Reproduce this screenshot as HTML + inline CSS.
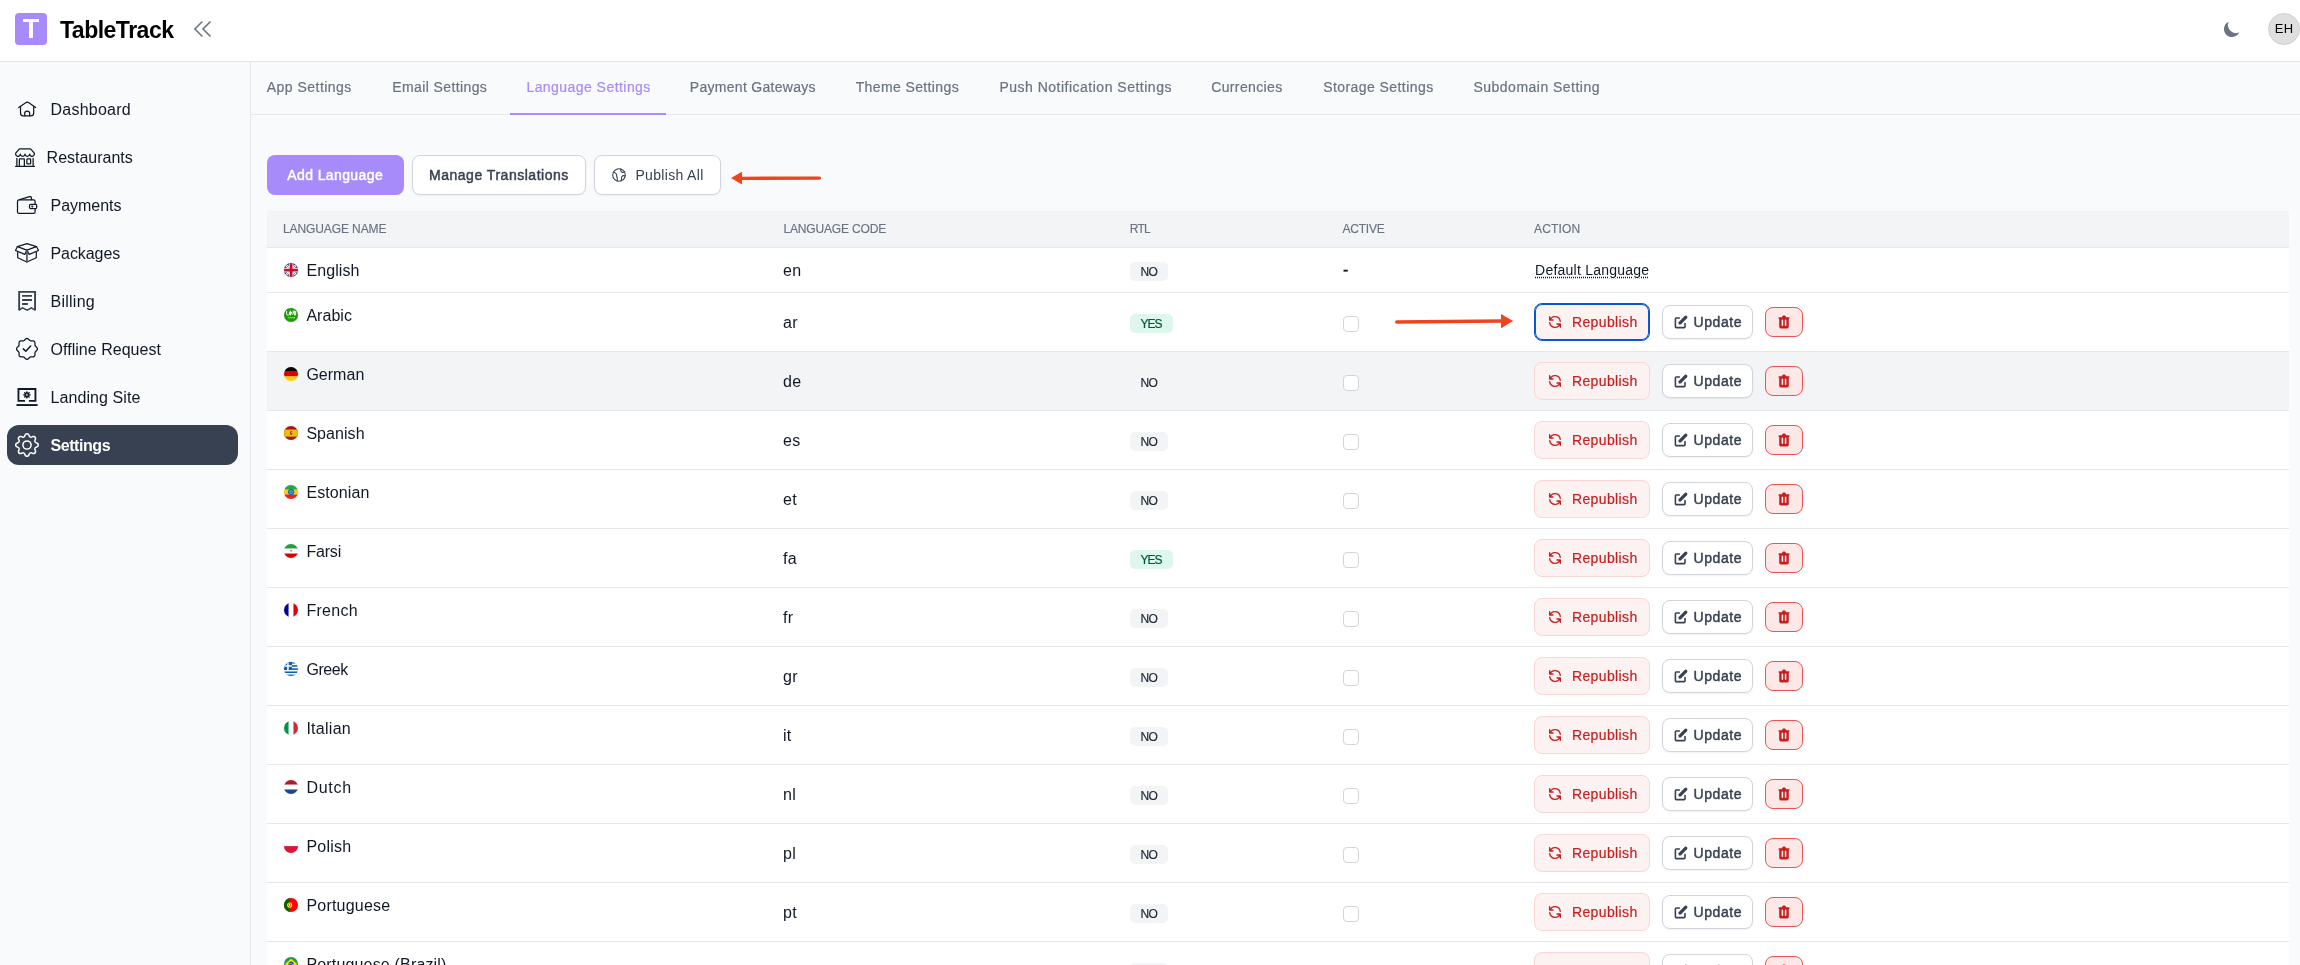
<!DOCTYPE html>
<html lang="en"><head><meta charset="utf-8"><title>TableTrack - Language Settings</title>
<style>
*{box-sizing:border-box;margin:0;padding:0}
html,body{width:2300px;height:965px;overflow:hidden;background:#f9fafb;-webkit-font-smoothing:antialiased;will-change:transform;font-family:"Liberation Sans",sans-serif;color:#111827}
.abs{position:absolute}
#hdr{position:absolute;left:0;top:0;width:2300px;height:62px;background:#fff;border-bottom:1px solid #e5e7eb}
#logo{position:absolute;left:15px;top:13px;width:32px;height:32px;border-radius:4px;background:#a78bfa;color:#fff;font-weight:700;font-size:27px;line-height:32px;text-align:center}
#brand{position:absolute;left:59.800px;top:14px;transform:scaleX(.960);transform-origin:0 0;font-size:24px;line-height:32px;font-weight:700;color:#000;white-space:nowrap}
#side{position:absolute;left:0;top:62px;width:251px;height:903px;background:#f9fafb;border-right:1px solid #e5e7eb}
.nav{position:absolute;left:7px;width:231px;height:40px;border-radius:12px;font-size:16px;line-height:40px;color:#111827;white-space:nowrap}
.nav span{position:absolute;top:1px}
.nav.act{background:#374151;color:#fff;font-weight:700}
#main{position:absolute;left:251px;top:62px;width:2049px;height:903px;background:#f9fafb}
#tabs{position:absolute;left:0;top:0;width:2049px;height:53px;border-bottom:1px solid #e5e7eb}
.tab{position:absolute;top:0;height:52px;line-height:50px;font-size:14px;color:#6b7280;-webkit-text-stroke:.200px currentColor;white-space:nowrap}
.tab.on{color:#a78bfa}
.tab.on:after{content:"";position:absolute;left:-16px;right:-15px;bottom:-1px;height:2px;background:#a78bfa}
.btn{position:absolute;top:155px;height:40px;border-radius:8px;font-size:14px;font-weight:400;-webkit-text-stroke:.450px currentColor;line-height:40px;white-space:nowrap}
.btn span{position:absolute;top:0}
.btn.w{background:#fff;color:#374151;border:1px solid #d1d5db;box-shadow:0 1px 2px rgba(0,0,0,.05);line-height:38px}
#thead{position:absolute;left:267px;top:211px;width:2022px;height:37px;background:#f3f4f6;border-bottom:1px solid #e5e7eb}
.th{position:absolute;top:0;line-height:36px;font-size:12px;color:#6b7280;-webkit-text-stroke:.150px currentColor;text-transform:uppercase;white-space:nowrap}
.row{position:absolute;left:267px;width:2022px;background:#fff;border-bottom:1px solid #e5e7eb}
.row.hov{background:#f3f4f6}
.cell{position:absolute;font-size:16px;line-height:24px;color:#111827;white-space:nowrap}
.flag{position:absolute;left:16px;width:16px;height:16px}
.flag svg{position:absolute;left:.900px;top:.900px;border-radius:50%;box-shadow:0 0 0 .600px #e3e7ef}
.badge{position:absolute;left:863px;height:19px;border-radius:5px;font-size:12px;-webkit-text-stroke:.200px currentColor;line-height:20px;white-space:nowrap}
.badge span{position:absolute;left:10.500px;top:0}
.badge.no{width:38px;background:#f3f4f6;color:#1f2937}
.badge.yes{width:43px;background:#def7ec;color:#03543f}
.cb{position:absolute;left:1076px;width:16px;height:16px;border:1px solid #d1d5db;border-radius:4px;background:#fff}
.rep{position:absolute;left:1267px;width:116px;height:38px;border:1px solid #fbd5d5;border-radius:8px;background:#fdf2f2;color:#c81e1e;font-size:14px;-webkit-text-stroke:.200px #c81e1e}
.rep.foc{box-shadow:inset 0 0 0 1px #0b57d0;border-color:#0b57d0}
.rep span{position:absolute;left:36.900px;top:0;line-height:36px;white-space:nowrap}
.rep svg{position:absolute;left:12px;top:10px}
.upd{position:absolute;left:1395px;width:91px;height:34px;border:1px solid #d1d5db;border-radius:8px;background:#fff;color:#374151;font-size:14px;font-weight:400;-webkit-text-stroke:.450px #374151;box-shadow:0 1px 2px rgba(0,0,0,.06)}
.upd span{position:absolute;left:30.500px;top:0;line-height:32px;white-space:nowrap}
.upd svg{position:absolute;left:9.500px;top:8px}
.del{position:absolute;left:1498px;width:38px;height:30px;border:1px solid #f05252;border-radius:8px;background:#fde8e8}
.del svg{position:absolute;left:10px;top:6px}
</style></head>
<body>
<div id="hdr"><div id="logo">T</div><div id="brand" style="letter-spacing:-0.54px">TableTrack</div><svg class="abs" style="left:190px;top:17px" width="24" height="24" viewBox="190 17 24 24" fill="none" stroke="#6b7280" stroke-width="1.600" stroke-linejoin="miter"><path d="M202.400 21.500 194.900 29l7.500 7.500M210.500 21.500 203 29l7.500 7.500"/></svg><svg class="abs" style="left:2221.800px;top:18.600px" width="20" height="20" viewBox="0 0 20 20"><path d="M17.293 13.293A8 8 0 0 1 6.707 2.707a8.001 8.001 0 1 0 10.586 10.586z" fill="#6b7280"/></svg><div class="abs" style="left:2268px;top:13px;width:32px;height:32px;border-radius:16px;background:#dfdfdf;border:1px solid #d0d0d0;font-size:13px;line-height:30px;text-align:center;color:#000;letter-spacing:.4px;text-indent:.4px">EH</div></div>
<div id="side">
<div class="nav" style="top:27px"><span style="left:43.5px;letter-spacing:0.23px">Dashboard</span></div>
<div class="nav" style="top:75px"><span style="left:39.6px;letter-spacing:-0.01px">Restaurants</span></div>
<div class="nav" style="top:123px"><span style="left:43.5px;letter-spacing:-0.03px">Payments</span></div>
<div class="nav" style="top:171px"><span style="left:43.5px;letter-spacing:-0.07px">Packages</span></div>
<div class="nav" style="top:219px"><span style="left:43.5px;letter-spacing:0.25px">Billing</span></div>
<div class="nav" style="top:267px"><span style="left:43.5px;letter-spacing:0.03px">Offline Request</span></div>
<div class="nav" style="top:315px"><span style="left:43.5px;letter-spacing:0.08px">Landing Site</span></div>
<div class="nav act" style="top:363px"><span style="left:43.5px;letter-spacing:-0.43px">Settings</span></div>
</div>
<svg class="abs" style="left:0;top:0" width="251" height="965" viewBox="0 0 251 965"><g fill="none" stroke="#111827" stroke-width="1.250" stroke-linecap="round" stroke-linejoin="round"><path d="M18.700 107.500 26.500 102.350q.800-.500 1.600 0L35.700 107.500"/><path d="M20.500 106.600v6.400q0 2.900 2.900 2.900h7.400q2.900 0 2.900-2.900v-6.400"/><path d="M24.700 115.700v-2.100a2.500 2.500 0 0 1 5 0v2.100"/></g><path transform="translate(15 147) scale(1.250)" fill="#111827" d="M2.970 1.350A1 1 0 0 1 3.730 1h8.540a1 1 0 0 1 .760.350l2.609 3.044A1.500 1.500 0 0 1 16 5.370v.255a2.375 2.375 0 0 1-4.250 1.458A2.371 2.371 0 0 1 9.875 8 2.370 2.370 0 0 1 8 7.083 2.370 2.370 0 0 1 6.125 8a2.370 2.370 0 0 1-1.875-.917A2.375 2.375 0 0 1 0 5.625V5.370a1.500 1.500 0 0 1 .361-.976zm1.780 4.275a1.375 1.375 0 0 0 2.750 0 .500.500 0 0 1 1 0 1.375 1.375 0 0 0 2.750 0 .500.500 0 0 1 1 0 1.375 1.375 0 1 0 2.750 0V5.370a.500.500 0 0 0-.120-.325L12.270 2H3.730L1.120 5.045A.500.500 0 0 0 1 5.370v.255a1.375 1.375 0 0 0 2.750 0 .500.500 0 0 1 1 0M1.500 8.500A.500.500 0 0 1 2 9v6h1v-5a1 1 0 0 1 1-1h3a1 1 0 0 1 1 1v5h6V9a.500.500 0 0 1 1 0v6h.500a.500.500 0 0 1 0 1H.500a.500.500 0 0 1 0-1H1V9a.500.500 0 0 1 .500-.500M4 15h3v-5H4zm5-5a1 1 0 0 1 1-1h2a1 1 0 0 1 1 1v3a1 1 0 0 1-1 1h-2a1 1 0 0 1-1-1zm3 0h-2v3h2z"/><g fill="none" stroke="#111827" stroke-width="1.250" stroke-linecap="round" stroke-linejoin="round"><rect x="17.500" y="199.900" width="17.600" height="13.500" rx="1.500"/><path d="M19.600 199.700 29.600 196.600q1.400-.400 1.700 1l.400 2"/><rect x="29.500" y="204.400" width="7.200" height="4.200" rx="1.200" fill="#f9fafb"/><circle cx="32.300" cy="206.500" r=".450" fill="#111827"/></g><g fill="none" stroke="#111827" stroke-width="1.200" stroke-linecap="round" stroke-linejoin="round"><path d="M26.900 243.600 17.400 246.600 26.900 250.100 36.500 246.600z"/><path d="M17.400 246.600 15.500 250.500 24.800 254.400 26.900 250.100 29.200 254.400 38.500 250.500 36.500 246.600"/><path d="M17.700 251.600v6.100L26.900 262 36.300 257.700v-6.100"/><path d="M26.900 250.500V262" stroke-width="1.700" stroke="#4b5563"/></g><g fill="none" stroke="#374151" stroke-width="1.850" stroke-linejoin="miter"><path d="M19.150 309.900V291.850H35.050V309.900"/><path d="M18.700 310.300 22.300 307.900 27.300 310.200 31.400 307.900 35.500 310.300" stroke-width="1.500"/><path d="M22.100 295.900H32M22.100 300H32M22.100 304H27.900" stroke-width="1.900"/></g><path d="M27.00 338.45 L27.68 338.59 L28.31 338.96 L28.87 339.48 L29.37 340.04 L29.85 340.51 L30.35 340.82 L30.92 340.95 L31.59 340.95 L32.33 340.92 L33.10 340.95 L33.82 341.13 L34.39 341.51 L34.77 342.08 L34.95 342.80 L34.98 343.57 L34.95 344.31 L34.95 344.98 L35.08 345.55 L35.39 346.05 L35.86 346.53 L36.42 347.03 L36.94 347.59 L37.31 348.22 L37.45 348.90 L37.31 349.58 L36.94 350.21 L36.42 350.77 L35.86 351.27 L35.39 351.75 L35.08 352.25 L34.95 352.82 L34.95 353.49 L34.98 354.23 L34.95 355.00 L34.77 355.72 L34.39 356.29 L33.82 356.67 L33.10 356.85 L32.33 356.88 L31.59 356.85 L30.92 356.85 L30.35 356.98 L29.85 357.29 L29.37 357.76 L28.87 358.32 L28.31 358.84 L27.68 359.21 L27.00 359.35 L26.32 359.21 L25.69 358.84 L25.13 358.32 L24.63 357.76 L24.15 357.29 L23.65 356.98 L23.08 356.85 L22.41 356.85 L21.67 356.88 L20.90 356.85 L20.18 356.67 L19.61 356.29 L19.23 355.72 L19.05 355.00 L19.02 354.23 L19.05 353.49 L19.05 352.82 L18.92 352.25 L18.61 351.75 L18.14 351.27 L17.58 350.77 L17.06 350.21 L16.69 349.58 L16.55 348.90 L16.69 348.22 L17.06 347.59 L17.58 347.03 L18.14 346.53 L18.61 346.05 L18.92 345.55 L19.05 344.98 L19.05 344.31 L19.02 343.57 L19.05 342.80 L19.23 342.08 L19.61 341.51 L20.18 341.13 L20.90 340.95 L21.67 340.92 L22.41 340.95 L23.08 340.95 L23.65 340.82 L24.15 340.51 L24.63 340.04 L25.13 339.48 L25.69 338.96 L26.32 338.59Z" fill="none" stroke="#111827" stroke-width="1.250" stroke-linejoin="round"/><path d="M23.300 348.900 25.800 351.200 30.700 346.100" fill="none" stroke="#111827" stroke-width="1.500" stroke-linecap="round" stroke-linejoin="round"/><g fill="none" stroke="#111827" stroke-width="1.850"><path d="M25 400.850H18.450V388.950H35.450V400.850H28.900"/><path d="M16.500 405.050H37.600" stroke-width="1.900"/></g><path d="M26.90 390.95 L27.27 391.19 L27.52 391.76 L27.67 392.35 L27.84 392.64 L28.16 392.55 L28.68 392.24 L29.27 392.02 L29.69 392.11 L29.78 392.53 L29.56 393.12 L29.25 393.64 L29.16 393.96 L29.45 394.13 L30.04 394.28 L30.61 394.53 L30.85 394.90 L30.61 395.27 L30.04 395.52 L29.45 395.67 L29.16 395.84 L29.25 396.16 L29.56 396.68 L29.78 397.27 L29.69 397.69 L29.27 397.78 L28.68 397.56 L28.16 397.25 L27.84 397.16 L27.67 397.45 L27.52 398.04 L27.27 398.61 L26.90 398.85 L26.53 398.61 L26.28 398.04 L26.13 397.45 L25.96 397.16 L25.64 397.25 L25.12 397.56 L24.53 397.78 L24.11 397.69 L24.02 397.27 L24.24 396.68 L24.55 396.16 L24.64 395.84 L24.35 395.67 L23.76 395.52 L23.19 395.27 L22.95 394.90 L23.19 394.53 L23.76 394.28 L24.35 394.13 L24.64 393.96 L24.55 393.64 L24.24 393.12 L24.02 392.53 L24.11 392.11 L24.53 392.02 L25.12 392.24 L25.64 392.55 L25.96 392.64 L26.13 392.35 L26.28 391.76 L26.53 391.19Z" fill="#111827"/><circle cx="26.900" cy="394.900" r="1.100" fill="#9ca3af"/><g transform="translate(15 433) scale(1.500)" fill="#fff"><path d="M8 4.754a3.246 3.246 0 1 0 0 6.492 3.246 3.246 0 0 0 0-6.492M5.754 8a2.246 2.246 0 1 1 4.492 0 2.246 2.246 0 0 1-4.492 0"/><path d="M9.796 1.343c-.527-1.790-3.065-1.790-3.592 0l-.094.319a.873.873 0 0 1-1.255.520l-.292-.160c-1.640-.892-3.433.902-2.540 2.541l.159.292a.873.873 0 0 1-.520 1.255l-.319.094c-1.790.527-1.790 3.065 0 3.592l.319.094a.873.873 0 0 1 .520 1.255l-.160.292c-.892 1.640.901 3.434 2.541 2.540l.292-.159a.873.873 0 0 1 1.255.520l.094.319c.527 1.790 3.065 1.790 3.592 0l.094-.319a.873.873 0 0 1 1.255-.520l.292.160c1.640.893 3.434-.902 2.540-2.541l-.159-.292a.873.873 0 0 1 .520-1.255l.319-.094c1.790-.527 1.790-3.065 0-3.592l-.319-.094a.873.873 0 0 1-.520-1.255l.160-.292c.893-1.640-.902-3.433-2.541-2.540l-.292.159a.873.873 0 0 1-1.255-.520zm-2.633.283c.246-.835 1.428-.835 1.674 0l.094.319a1.873 1.873 0 0 0 2.693 1.115l.291-.160c.764-.415 1.600.420 1.184 1.185l-.159.292a1.873 1.873 0 0 0 1.116 2.692l.318.094c.835.246.835 1.428 0 1.674l-.319.094a1.873 1.873 0 0 0-1.115 2.693l.160.291c.415.764-.420 1.600-1.185 1.184l-.291-.159a1.873 1.873 0 0 0-2.693 1.116l-.094.318c-.246.835-1.428.835-1.674 0l-.094-.319a1.873 1.873 0 0 0-2.692-1.115l-.292.160c-.764.415-1.600-.420-1.184-1.185l.159-.291A1.873 1.873 0 0 0 1.945 8.930l-.319-.094c-.835-.246-.835-1.428 0-1.674l.319-.094A1.873 1.873 0 0 0 3.060 4.377l-.160-.292c-.415-.764.420-1.600 1.185-1.184l.292.159a1.873 1.873 0 0 0 2.692-1.115z"/></g></svg>
<div id="main"><div id="tabs"><div class="tab" style="left:15.8px;letter-spacing:0.47px">App Settings</div><div class="tab" style="left:141.2px;letter-spacing:0.4px">Email Settings</div><div class="tab on" style="left:275.4px;letter-spacing:0.45px">Language Settings</div><div class="tab" style="left:438.8px;letter-spacing:0.29px">Payment Gateways</div><div class="tab" style="left:604.7px;letter-spacing:0.38px">Theme Settings</div><div class="tab" style="left:748.4px;letter-spacing:0.5px">Push Notification Settings</div><div class="tab" style="left:960.2px;letter-spacing:0.37px">Currencies</div><div class="tab" style="left:1072.2px;letter-spacing:0.43px">Storage Settings</div><div class="tab" style="left:1222.5px;letter-spacing:0.48px">Subdomain Setting</div></div></div>
<div class="btn" style="left:267px;width:137px;background:#a78bfa;color:#fff"><span style="left:20.3px;letter-spacing:0.39px">Add Language</span></div><div class="btn w" style="left:412px;width:174px"><span style="left:16px;letter-spacing:0.52px">Manage Translations</span></div><div class="btn w" style="left:594px;width:127px;-webkit-text-stroke:0"><svg width="16" height="16" viewBox="0 0 16 16" fill="none" stroke="#374151" stroke-width="1.100" stroke-linecap="round" stroke-linejoin="round" style="position:absolute;left:16.200px;top:11.300px"><circle cx="8" cy="8" r="6.300"/><path d="M2.300 5.300c1.600.100 2.900.9 3.300 2.200.300 1-.3 1.900.4 2.800.7.900.5 2 .1 3.600"/><path d="M9.800 2c-.5 1.300-.1 2.400.9 3 1 .6 2.300.4 3.100-.5"/><path d="M14.200 9c-1.400-.6-2.800-.3-3.400.7-.6 1 .1 2.400-.7 3.900"/></svg><span style="left:40.4px;letter-spacing:0.33px">Publish All</span></div>
<svg class="abs" style="left:726px;top:166px" width="100" height="24" viewBox="726 166 100 24"><path d="M741 178.300 819.500 178.100" stroke="#f0441f" stroke-width="3.300" stroke-linecap="round"/><path d="M731 178.100 742 171.800v12.600z" fill="#f0441f"/></svg>
<div id="thead"><div class="th" style="left:16px;letter-spacing:-0.1px">Language Name</div><div class="th" style="left:516.5px;letter-spacing:-0.17px">Language Code</div><div class="th" style="left:862.8px;letter-spacing:-0.79px">RTL</div><div class="th" style="left:1075.4px;letter-spacing:-0.19px">Active</div><div class="th" style="left:1267.1px;letter-spacing:0.15px">Action</div></div>
<div class="row" style="top:248px;height:45px"><div class="flag" style="top:14px"><svg width="14.200" height="14.200" viewBox="0 0 512 512"><rect width="512" height="512" fill="#012169"/><path d="M0 0 512 512M512 0 0 512" stroke="#fff" stroke-width="84"/><path d="M0 0 512 512M512 0 0 512" stroke="#c8102e" stroke-width="24"/><path d="M256 0v512M0 256h512" stroke="#fff" stroke-width="172"/><path d="M256 0v512M0 256h512" stroke="#c8102e" stroke-width="104"/></svg></div><div class="cell" style="left:39.4px;top:11px;letter-spacing:0.09px">English</div><div class="cell" style="left:516px;top:11px;letter-spacing:.3px">en</div><div class="badge no" style="top:14px"><span style="letter-spacing:-0.67px">NO</span></div><div class="cell" style="left:1076px;top:10px;font-size:16px;-webkit-text-stroke:.300px #111827">-</div><div class="cell" style="left:1268.1px;top:10px;font-size:14px;letter-spacing:0.23px;text-decoration:underline dotted;text-underline-offset:1.500px">Default Language</div></div>
<div class="row" style="top:293px;height:59px"><div class="flag" style="top:14px"><svg width="14.200" height="14.200" viewBox="0 0 512 512"><rect width="512" height="512" fill="#199d00"/><g stroke="#fff" fill="none" stroke-linecap="round"><path d="M95 120v95q0 40 40 40h30q35 0 35-40v-70M235 105v150M275 150q-30 50 10 70 40 15 50-30v-85M375 105v150h45V125" stroke-width="34"/><path d="M150 352h225" stroke-width="20"/><path d="M375 335v34" stroke-width="16"/></g></svg></div><div class="cell" style="left:39.4px;top:11px;letter-spacing:0.03px">Arabic</div><div class="cell" style="left:516px;top:18px;letter-spacing:.3px">ar</div><div class="badge yes" style="top:21px"><span style="letter-spacing:-1px">YES</span></div><div class="cb" style="top:23px"></div><div class="rep foc" style="top:10px"><svg width="16" height="16" viewBox="0 0 24 24" fill="none" stroke="#c81e1e" stroke-width="2" stroke-linecap="round" stroke-linejoin="round"><path d="M4 4v5h.582m15.356 2A8.001 8.001 0 0 0 4.582 9m0 0H9m11 11v-5h-.581m0 0a8.003 8.003 0 0 1-15.357-2m15.357 2H15"/></svg><span style="letter-spacing:0.39px">Republish</span></div><div class="upd" style="top:12px"><svg width="16" height="16" viewBox="0 0 20 20" fill="#374151"><path d="M17.414 2.586a2 2 0 0 0-2.828 0L7 10.172V13h2.828l7.586-7.586a2 2 0 0 0 0-2.828z"/><path fill-rule="evenodd" d="M2 6a2 2 0 0 1 2-2h4a1 1 0 0 1 0 2H4v10h10v-4a1 1 0 1 1 2 0v4a2 2 0 0 1-2 2H4a2 2 0 0 1-2-2V6z"/></svg><span style="letter-spacing:0.57px">Update</span></div><div class="del" style="top:14px"><svg width="16" height="16" viewBox="0 0 20 20" fill="#c81e1e"><path fill-rule="evenodd" d="M9 2a1 1 0 0 0-.894.553L7.382 4H4a1 1 0 0 0 0 2v10a2 2 0 0 0 2 2h8a2 2 0 0 0 2-2V6a1 1 0 1 0 0-2h-3.382l-.724-1.447A1 1 0 0 0 11 2H9zM7 8a1 1 0 0 1 2 0v6a1 1 0 1 1-2 0V8zm5-1a1 1 0 0 0-1 1v6a1 1 0 1 0 2 0V8a1 1 0 0 0-1-1z"/></svg></div></div>
<div class="row hov" style="top:352px;height:59px"><div class="flag" style="top:14px"><svg width="14.200" height="14.200" viewBox="0 0 512 512"><rect width="512" height="170.7" fill="#000"/><rect y="170.7" width="512" height="170.7" fill="#d00"/><rect y="341.4" width="512" height="171.7" fill="#ffce00"/></svg></div><div class="cell" style="left:39.4px;top:11px;letter-spacing:0.02px">German</div><div class="cell" style="left:516px;top:18px;letter-spacing:.3px">de</div><div class="badge no" style="top:21px"><span style="letter-spacing:-0.67px">NO</span></div><div class="cb" style="top:23px"></div><div class="rep" style="top:10px"><svg width="16" height="16" viewBox="0 0 24 24" fill="none" stroke="#c81e1e" stroke-width="2" stroke-linecap="round" stroke-linejoin="round"><path d="M4 4v5h.582m15.356 2A8.001 8.001 0 0 0 4.582 9m0 0H9m11 11v-5h-.581m0 0a8.003 8.003 0 0 1-15.357-2m15.357 2H15"/></svg><span style="letter-spacing:0.39px">Republish</span></div><div class="upd" style="top:12px"><svg width="16" height="16" viewBox="0 0 20 20" fill="#374151"><path d="M17.414 2.586a2 2 0 0 0-2.828 0L7 10.172V13h2.828l7.586-7.586a2 2 0 0 0 0-2.828z"/><path fill-rule="evenodd" d="M2 6a2 2 0 0 1 2-2h4a1 1 0 0 1 0 2H4v10h10v-4a1 1 0 1 1 2 0v4a2 2 0 0 1-2 2H4a2 2 0 0 1-2-2V6z"/></svg><span style="letter-spacing:0.57px">Update</span></div><div class="del" style="top:14px"><svg width="16" height="16" viewBox="0 0 20 20" fill="#c81e1e"><path fill-rule="evenodd" d="M9 2a1 1 0 0 0-.894.553L7.382 4H4a1 1 0 0 0 0 2v10a2 2 0 0 0 2 2h8a2 2 0 0 0 2-2V6a1 1 0 1 0 0-2h-3.382l-.724-1.447A1 1 0 0 0 11 2H9zM7 8a1 1 0 0 1 2 0v6a1 1 0 1 1-2 0V8zm5-1a1 1 0 0 0-1 1v6a1 1 0 1 0 2 0V8a1 1 0 0 0-1-1z"/></svg></div></div>
<div class="row" style="top:411px;height:59px"><div class="flag" style="top:14px"><svg width="14.200" height="14.200" viewBox="0 0 512 512"><rect width="512" height="512" fill="#aa151b"/><rect y="128" width="512" height="256" fill="#f1bf00"/><g><rect x="196" y="212" width="24" height="100" fill="#c8b47c"/><rect x="300" y="212" width="24" height="100" fill="#c8b47c"/><path d="M224 206h72v78q0 34-36 34t-36-34z" fill="#ad1519"/><path d="M260 206h36v56h-36z" fill="#d9c9a8"/><path d="M224 262h36v30q-30 6-36-12z" fill="#5a3fa0"/><path d="M232 176h56l-6 30h-44z" fill="#c8102e"/></g></svg></div><div class="cell" style="left:39.4px;top:11px;letter-spacing:0.06px">Spanish</div><div class="cell" style="left:516px;top:18px;letter-spacing:.3px">es</div><div class="badge no" style="top:21px"><span style="letter-spacing:-0.67px">NO</span></div><div class="cb" style="top:23px"></div><div class="rep" style="top:10px"><svg width="16" height="16" viewBox="0 0 24 24" fill="none" stroke="#c81e1e" stroke-width="2" stroke-linecap="round" stroke-linejoin="round"><path d="M4 4v5h.582m15.356 2A8.001 8.001 0 0 0 4.582 9m0 0H9m11 11v-5h-.581m0 0a8.003 8.003 0 0 1-15.357-2m15.357 2H15"/></svg><span style="letter-spacing:0.39px">Republish</span></div><div class="upd" style="top:12px"><svg width="16" height="16" viewBox="0 0 20 20" fill="#374151"><path d="M17.414 2.586a2 2 0 0 0-2.828 0L7 10.172V13h2.828l7.586-7.586a2 2 0 0 0 0-2.828z"/><path fill-rule="evenodd" d="M2 6a2 2 0 0 1 2-2h4a1 1 0 0 1 0 2H4v10h10v-4a1 1 0 1 1 2 0v4a2 2 0 0 1-2 2H4a2 2 0 0 1-2-2V6z"/></svg><span style="letter-spacing:0.57px">Update</span></div><div class="del" style="top:14px"><svg width="16" height="16" viewBox="0 0 20 20" fill="#c81e1e"><path fill-rule="evenodd" d="M9 2a1 1 0 0 0-.894.553L7.382 4H4a1 1 0 0 0 0 2v10a2 2 0 0 0 2 2h8a2 2 0 0 0 2-2V6a1 1 0 1 0 0-2h-3.382l-.724-1.447A1 1 0 0 0 11 2H9zM7 8a1 1 0 0 1 2 0v6a1 1 0 1 1-2 0V8zm5-1a1 1 0 0 0-1 1v6a1 1 0 1 0 2 0V8a1 1 0 0 0-1-1z"/></svg></div></div>
<div class="row" style="top:470px;height:59px"><div class="flag" style="top:14px"><svg width="14.200" height="14.200" viewBox="0 0 512 512"><rect width="512" height="170.7" fill="#20aa46"/><rect y="170.7" width="512" height="170.7" fill="#ffc621"/><rect y="341.4" width="512" height="171.7" fill="#ef2118"/><circle cx="256" cy="256" r="112" fill="#006bc6"/><path d="M256 178 274 236h60l-48 35 18 58-48-36-48 36 18-58-48-35h60z" fill="none" stroke="#ffc621" stroke-width="15"/></svg></div><div class="cell" style="left:39.4px;top:11px;letter-spacing:0.09px">Estonian</div><div class="cell" style="left:516px;top:18px;letter-spacing:.3px">et</div><div class="badge no" style="top:21px"><span style="letter-spacing:-0.67px">NO</span></div><div class="cb" style="top:23px"></div><div class="rep" style="top:10px"><svg width="16" height="16" viewBox="0 0 24 24" fill="none" stroke="#c81e1e" stroke-width="2" stroke-linecap="round" stroke-linejoin="round"><path d="M4 4v5h.582m15.356 2A8.001 8.001 0 0 0 4.582 9m0 0H9m11 11v-5h-.581m0 0a8.003 8.003 0 0 1-15.357-2m15.357 2H15"/></svg><span style="letter-spacing:0.39px">Republish</span></div><div class="upd" style="top:12px"><svg width="16" height="16" viewBox="0 0 20 20" fill="#374151"><path d="M17.414 2.586a2 2 0 0 0-2.828 0L7 10.172V13h2.828l7.586-7.586a2 2 0 0 0 0-2.828z"/><path fill-rule="evenodd" d="M2 6a2 2 0 0 1 2-2h4a1 1 0 0 1 0 2H4v10h10v-4a1 1 0 1 1 2 0v4a2 2 0 0 1-2 2H4a2 2 0 0 1-2-2V6z"/></svg><span style="letter-spacing:0.57px">Update</span></div><div class="del" style="top:14px"><svg width="16" height="16" viewBox="0 0 20 20" fill="#c81e1e"><path fill-rule="evenodd" d="M9 2a1 1 0 0 0-.894.553L7.382 4H4a1 1 0 0 0 0 2v10a2 2 0 0 0 2 2h8a2 2 0 0 0 2-2V6a1 1 0 1 0 0-2h-3.382l-.724-1.447A1 1 0 0 0 11 2H9zM7 8a1 1 0 0 1 2 0v6a1 1 0 1 1-2 0V8zm5-1a1 1 0 0 0-1 1v6a1 1 0 1 0 2 0V8a1 1 0 0 0-1-1z"/></svg></div></div>
<div class="row" style="top:529px;height:59px"><div class="flag" style="top:14px"><svg width="14.200" height="14.200" viewBox="0 0 512 512"><rect width="512" height="170.7" fill="#239f40"/><rect y="170.7" width="512" height="170.7" fill="#fff"/><rect y="341.4" width="512" height="171.7" fill="#da0000"/><path d="M256 205q-44 30-12 88l12-62 12 62q32-58-12-88z" fill="#da0000"/><path d="M0 176h512M0 336h512" stroke="#fff" stroke-width="14" stroke-dasharray="22 14" opacity=".75"/></svg></div><div class="cell" style="left:39.4px;top:11px;letter-spacing:-0.18px">Farsi</div><div class="cell" style="left:516px;top:18px;letter-spacing:.3px">fa</div><div class="badge yes" style="top:21px"><span style="letter-spacing:-1px">YES</span></div><div class="cb" style="top:23px"></div><div class="rep" style="top:10px"><svg width="16" height="16" viewBox="0 0 24 24" fill="none" stroke="#c81e1e" stroke-width="2" stroke-linecap="round" stroke-linejoin="round"><path d="M4 4v5h.582m15.356 2A8.001 8.001 0 0 0 4.582 9m0 0H9m11 11v-5h-.581m0 0a8.003 8.003 0 0 1-15.357-2m15.357 2H15"/></svg><span style="letter-spacing:0.39px">Republish</span></div><div class="upd" style="top:12px"><svg width="16" height="16" viewBox="0 0 20 20" fill="#374151"><path d="M17.414 2.586a2 2 0 0 0-2.828 0L7 10.172V13h2.828l7.586-7.586a2 2 0 0 0 0-2.828z"/><path fill-rule="evenodd" d="M2 6a2 2 0 0 1 2-2h4a1 1 0 0 1 0 2H4v10h10v-4a1 1 0 1 1 2 0v4a2 2 0 0 1-2 2H4a2 2 0 0 1-2-2V6z"/></svg><span style="letter-spacing:0.57px">Update</span></div><div class="del" style="top:14px"><svg width="16" height="16" viewBox="0 0 20 20" fill="#c81e1e"><path fill-rule="evenodd" d="M9 2a1 1 0 0 0-.894.553L7.382 4H4a1 1 0 0 0 0 2v10a2 2 0 0 0 2 2h8a2 2 0 0 0 2-2V6a1 1 0 1 0 0-2h-3.382l-.724-1.447A1 1 0 0 0 11 2H9zM7 8a1 1 0 0 1 2 0v6a1 1 0 1 1-2 0V8zm5-1a1 1 0 0 0-1 1v6a1 1 0 1 0 2 0V8a1 1 0 0 0-1-1z"/></svg></div></div>
<div class="row" style="top:588px;height:59px"><div class="flag" style="top:14px"><svg width="14.200" height="14.200" viewBox="0 0 512 512"><rect width="170.7" height="512" fill="#000091"/><rect x="170.7" width="170.7" height="512" fill="#fff"/><rect x="341.4" width="171.7" height="512" fill="#e1000f"/></svg></div><div class="cell" style="left:39.4px;top:11px;letter-spacing:0.3px">French</div><div class="cell" style="left:516px;top:18px;letter-spacing:.3px">fr</div><div class="badge no" style="top:21px"><span style="letter-spacing:-0.67px">NO</span></div><div class="cb" style="top:23px"></div><div class="rep" style="top:10px"><svg width="16" height="16" viewBox="0 0 24 24" fill="none" stroke="#c81e1e" stroke-width="2" stroke-linecap="round" stroke-linejoin="round"><path d="M4 4v5h.582m15.356 2A8.001 8.001 0 0 0 4.582 9m0 0H9m11 11v-5h-.581m0 0a8.003 8.003 0 0 1-15.357-2m15.357 2H15"/></svg><span style="letter-spacing:0.39px">Republish</span></div><div class="upd" style="top:12px"><svg width="16" height="16" viewBox="0 0 20 20" fill="#374151"><path d="M17.414 2.586a2 2 0 0 0-2.828 0L7 10.172V13h2.828l7.586-7.586a2 2 0 0 0 0-2.828z"/><path fill-rule="evenodd" d="M2 6a2 2 0 0 1 2-2h4a1 1 0 0 1 0 2H4v10h10v-4a1 1 0 1 1 2 0v4a2 2 0 0 1-2 2H4a2 2 0 0 1-2-2V6z"/></svg><span style="letter-spacing:0.57px">Update</span></div><div class="del" style="top:14px"><svg width="16" height="16" viewBox="0 0 20 20" fill="#c81e1e"><path fill-rule="evenodd" d="M9 2a1 1 0 0 0-.894.553L7.382 4H4a1 1 0 0 0 0 2v10a2 2 0 0 0 2 2h8a2 2 0 0 0 2-2V6a1 1 0 1 0 0-2h-3.382l-.724-1.447A1 1 0 0 0 11 2H9zM7 8a1 1 0 0 1 2 0v6a1 1 0 1 1-2 0V8zm5-1a1 1 0 0 0-1 1v6a1 1 0 1 0 2 0V8a1 1 0 0 0-1-1z"/></svg></div></div>
<div class="row" style="top:647px;height:59px"><div class="flag" style="top:14px"><svg width="14.200" height="14.200" viewBox="0 0 512 512"><rect width="512" height="512" fill="#fff"/><rect y="0.0" width="512" height="56.9" fill="#0d5eaf"/><rect y="113.8" width="512" height="56.9" fill="#0d5eaf"/><rect y="227.6" width="512" height="56.9" fill="#0d5eaf"/><rect y="341.3" width="512" height="56.9" fill="#0d5eaf"/><rect y="455.1" width="512" height="56.9" fill="#0d5eaf"/><rect width="284.4" height="284.4" fill="#0d5eaf"/><path d="M142.2 0v284.4M0 142.2h284.4" stroke="#fff" stroke-width="56.9"/></svg></div><div class="cell" style="left:39.4px;top:11px;letter-spacing:-0.44px">Greek</div><div class="cell" style="left:516px;top:18px;letter-spacing:.3px">gr</div><div class="badge no" style="top:21px"><span style="letter-spacing:-0.67px">NO</span></div><div class="cb" style="top:23px"></div><div class="rep" style="top:10px"><svg width="16" height="16" viewBox="0 0 24 24" fill="none" stroke="#c81e1e" stroke-width="2" stroke-linecap="round" stroke-linejoin="round"><path d="M4 4v5h.582m15.356 2A8.001 8.001 0 0 0 4.582 9m0 0H9m11 11v-5h-.581m0 0a8.003 8.003 0 0 1-15.357-2m15.357 2H15"/></svg><span style="letter-spacing:0.39px">Republish</span></div><div class="upd" style="top:12px"><svg width="16" height="16" viewBox="0 0 20 20" fill="#374151"><path d="M17.414 2.586a2 2 0 0 0-2.828 0L7 10.172V13h2.828l7.586-7.586a2 2 0 0 0 0-2.828z"/><path fill-rule="evenodd" d="M2 6a2 2 0 0 1 2-2h4a1 1 0 0 1 0 2H4v10h10v-4a1 1 0 1 1 2 0v4a2 2 0 0 1-2 2H4a2 2 0 0 1-2-2V6z"/></svg><span style="letter-spacing:0.57px">Update</span></div><div class="del" style="top:14px"><svg width="16" height="16" viewBox="0 0 20 20" fill="#c81e1e"><path fill-rule="evenodd" d="M9 2a1 1 0 0 0-.894.553L7.382 4H4a1 1 0 0 0 0 2v10a2 2 0 0 0 2 2h8a2 2 0 0 0 2-2V6a1 1 0 1 0 0-2h-3.382l-.724-1.447A1 1 0 0 0 11 2H9zM7 8a1 1 0 0 1 2 0v6a1 1 0 1 1-2 0V8zm5-1a1 1 0 0 0-1 1v6a1 1 0 1 0 2 0V8a1 1 0 0 0-1-1z"/></svg></div></div>
<div class="row" style="top:706px;height:59px"><div class="flag" style="top:14px"><svg width="14.200" height="14.200" viewBox="0 0 512 512"><rect width="170.7" height="512" fill="#009246"/><rect x="170.7" width="170.7" height="512" fill="#fff"/><rect x="341.4" width="171.7" height="512" fill="#ce2b37"/></svg></div><div class="cell" style="left:39.4px;top:11px;letter-spacing:0.27px">Italian</div><div class="cell" style="left:516px;top:18px;letter-spacing:.3px">it</div><div class="badge no" style="top:21px"><span style="letter-spacing:-0.67px">NO</span></div><div class="cb" style="top:23px"></div><div class="rep" style="top:10px"><svg width="16" height="16" viewBox="0 0 24 24" fill="none" stroke="#c81e1e" stroke-width="2" stroke-linecap="round" stroke-linejoin="round"><path d="M4 4v5h.582m15.356 2A8.001 8.001 0 0 0 4.582 9m0 0H9m11 11v-5h-.581m0 0a8.003 8.003 0 0 1-15.357-2m15.357 2H15"/></svg><span style="letter-spacing:0.39px">Republish</span></div><div class="upd" style="top:12px"><svg width="16" height="16" viewBox="0 0 20 20" fill="#374151"><path d="M17.414 2.586a2 2 0 0 0-2.828 0L7 10.172V13h2.828l7.586-7.586a2 2 0 0 0 0-2.828z"/><path fill-rule="evenodd" d="M2 6a2 2 0 0 1 2-2h4a1 1 0 0 1 0 2H4v10h10v-4a1 1 0 1 1 2 0v4a2 2 0 0 1-2 2H4a2 2 0 0 1-2-2V6z"/></svg><span style="letter-spacing:0.57px">Update</span></div><div class="del" style="top:14px"><svg width="16" height="16" viewBox="0 0 20 20" fill="#c81e1e"><path fill-rule="evenodd" d="M9 2a1 1 0 0 0-.894.553L7.382 4H4a1 1 0 0 0 0 2v10a2 2 0 0 0 2 2h8a2 2 0 0 0 2-2V6a1 1 0 1 0 0-2h-3.382l-.724-1.447A1 1 0 0 0 11 2H9zM7 8a1 1 0 0 1 2 0v6a1 1 0 1 1-2 0V8zm5-1a1 1 0 0 0-1 1v6a1 1 0 1 0 2 0V8a1 1 0 0 0-1-1z"/></svg></div></div>
<div class="row" style="top:765px;height:59px"><div class="flag" style="top:14px"><svg width="14.200" height="14.200" viewBox="0 0 512 512"><rect width="512" height="170.7" fill="#ae1c28"/><rect y="170.7" width="512" height="170.7" fill="#fff"/><rect y="341.4" width="512" height="171.7" fill="#21468b"/></svg></div><div class="cell" style="left:39.4px;top:11px;letter-spacing:0.73px">Dutch</div><div class="cell" style="left:516px;top:18px;letter-spacing:.3px">nl</div><div class="badge no" style="top:21px"><span style="letter-spacing:-0.67px">NO</span></div><div class="cb" style="top:23px"></div><div class="rep" style="top:10px"><svg width="16" height="16" viewBox="0 0 24 24" fill="none" stroke="#c81e1e" stroke-width="2" stroke-linecap="round" stroke-linejoin="round"><path d="M4 4v5h.582m15.356 2A8.001 8.001 0 0 0 4.582 9m0 0H9m11 11v-5h-.581m0 0a8.003 8.003 0 0 1-15.357-2m15.357 2H15"/></svg><span style="letter-spacing:0.39px">Republish</span></div><div class="upd" style="top:12px"><svg width="16" height="16" viewBox="0 0 20 20" fill="#374151"><path d="M17.414 2.586a2 2 0 0 0-2.828 0L7 10.172V13h2.828l7.586-7.586a2 2 0 0 0 0-2.828z"/><path fill-rule="evenodd" d="M2 6a2 2 0 0 1 2-2h4a1 1 0 0 1 0 2H4v10h10v-4a1 1 0 1 1 2 0v4a2 2 0 0 1-2 2H4a2 2 0 0 1-2-2V6z"/></svg><span style="letter-spacing:0.57px">Update</span></div><div class="del" style="top:14px"><svg width="16" height="16" viewBox="0 0 20 20" fill="#c81e1e"><path fill-rule="evenodd" d="M9 2a1 1 0 0 0-.894.553L7.382 4H4a1 1 0 0 0 0 2v10a2 2 0 0 0 2 2h8a2 2 0 0 0 2-2V6a1 1 0 1 0 0-2h-3.382l-.724-1.447A1 1 0 0 0 11 2H9zM7 8a1 1 0 0 1 2 0v6a1 1 0 1 1-2 0V8zm5-1a1 1 0 0 0-1 1v6a1 1 0 1 0 2 0V8a1 1 0 0 0-1-1z"/></svg></div></div>
<div class="row" style="top:824px;height:59px"><div class="flag" style="top:14px"><svg width="14.200" height="14.200" viewBox="0 0 512 512"><rect width="512" height="256" fill="#fff"/><rect y="256" width="512" height="256" fill="#dc143c"/></svg></div><div class="cell" style="left:39.4px;top:11px;letter-spacing:0.22px">Polish</div><div class="cell" style="left:516px;top:18px;letter-spacing:.3px">pl</div><div class="badge no" style="top:21px"><span style="letter-spacing:-0.67px">NO</span></div><div class="cb" style="top:23px"></div><div class="rep" style="top:10px"><svg width="16" height="16" viewBox="0 0 24 24" fill="none" stroke="#c81e1e" stroke-width="2" stroke-linecap="round" stroke-linejoin="round"><path d="M4 4v5h.582m15.356 2A8.001 8.001 0 0 0 4.582 9m0 0H9m11 11v-5h-.581m0 0a8.003 8.003 0 0 1-15.357-2m15.357 2H15"/></svg><span style="letter-spacing:0.39px">Republish</span></div><div class="upd" style="top:12px"><svg width="16" height="16" viewBox="0 0 20 20" fill="#374151"><path d="M17.414 2.586a2 2 0 0 0-2.828 0L7 10.172V13h2.828l7.586-7.586a2 2 0 0 0 0-2.828z"/><path fill-rule="evenodd" d="M2 6a2 2 0 0 1 2-2h4a1 1 0 0 1 0 2H4v10h10v-4a1 1 0 1 1 2 0v4a2 2 0 0 1-2 2H4a2 2 0 0 1-2-2V6z"/></svg><span style="letter-spacing:0.57px">Update</span></div><div class="del" style="top:14px"><svg width="16" height="16" viewBox="0 0 20 20" fill="#c81e1e"><path fill-rule="evenodd" d="M9 2a1 1 0 0 0-.894.553L7.382 4H4a1 1 0 0 0 0 2v10a2 2 0 0 0 2 2h8a2 2 0 0 0 2-2V6a1 1 0 1 0 0-2h-3.382l-.724-1.447A1 1 0 0 0 11 2H9zM7 8a1 1 0 0 1 2 0v6a1 1 0 1 1-2 0V8zm5-1a1 1 0 0 0-1 1v6a1 1 0 1 0 2 0V8a1 1 0 0 0-1-1z"/></svg></div></div>
<div class="row" style="top:883px;height:59px"><div class="flag" style="top:14px"><svg width="14.200" height="14.200" viewBox="0 0 512 512"><rect width="512" height="512" fill="#f00"/><rect width="205" height="512" fill="#060"/><circle cx="205" cy="256" r="92" fill="#ff0"/><path d="M160 200h90v64q0 48-45 48t-45-48z" fill="#f00"/><path d="M180 220h50v44q0 26-25 26t-25-26z" fill="#fff"/></svg></div><div class="cell" style="left:39.4px;top:11px;letter-spacing:0.21px">Portuguese</div><div class="cell" style="left:516px;top:18px;letter-spacing:.3px">pt</div><div class="badge no" style="top:21px"><span style="letter-spacing:-0.67px">NO</span></div><div class="cb" style="top:23px"></div><div class="rep" style="top:10px"><svg width="16" height="16" viewBox="0 0 24 24" fill="none" stroke="#c81e1e" stroke-width="2" stroke-linecap="round" stroke-linejoin="round"><path d="M4 4v5h.582m15.356 2A8.001 8.001 0 0 0 4.582 9m0 0H9m11 11v-5h-.581m0 0a8.003 8.003 0 0 1-15.357-2m15.357 2H15"/></svg><span style="letter-spacing:0.39px">Republish</span></div><div class="upd" style="top:12px"><svg width="16" height="16" viewBox="0 0 20 20" fill="#374151"><path d="M17.414 2.586a2 2 0 0 0-2.828 0L7 10.172V13h2.828l7.586-7.586a2 2 0 0 0 0-2.828z"/><path fill-rule="evenodd" d="M2 6a2 2 0 0 1 2-2h4a1 1 0 0 1 0 2H4v10h10v-4a1 1 0 1 1 2 0v4a2 2 0 0 1-2 2H4a2 2 0 0 1-2-2V6z"/></svg><span style="letter-spacing:0.57px">Update</span></div><div class="del" style="top:14px"><svg width="16" height="16" viewBox="0 0 20 20" fill="#c81e1e"><path fill-rule="evenodd" d="M9 2a1 1 0 0 0-.894.553L7.382 4H4a1 1 0 0 0 0 2v10a2 2 0 0 0 2 2h8a2 2 0 0 0 2-2V6a1 1 0 1 0 0-2h-3.382l-.724-1.447A1 1 0 0 0 11 2H9zM7 8a1 1 0 0 1 2 0v6a1 1 0 1 1-2 0V8zm5-1a1 1 0 0 0-1 1v6a1 1 0 1 0 2 0V8a1 1 0 0 0-1-1z"/></svg></div></div>
<div class="row" style="top:942px;height:59px"><div class="flag" style="top:14px"><svg width="14.200" height="14.200" viewBox="0 0 512 512"><rect width="512" height="512" fill="#229e45"/><path d="M256 62 474 256 256 450 38 256z" fill="#f8e509"/><circle cx="256" cy="256" r="96" fill="#2b49a3"/><path d="M164 236q100-20 186 50" fill="none" stroke="#fff" stroke-width="16"/></svg></div><div class="cell" style="left:39.4px;top:11px;letter-spacing:0.17px">Portuguese (Brazil)</div><div class="cell" style="left:516px;top:18px;letter-spacing:.3px">pt-br</div><div class="badge no" style="top:21px"><span style="letter-spacing:-0.67px">NO</span></div><div class="cb" style="top:23px"></div><div class="rep" style="top:10px"><svg width="16" height="16" viewBox="0 0 24 24" fill="none" stroke="#c81e1e" stroke-width="2" stroke-linecap="round" stroke-linejoin="round"><path d="M4 4v5h.582m15.356 2A8.001 8.001 0 0 0 4.582 9m0 0H9m11 11v-5h-.581m0 0a8.003 8.003 0 0 1-15.357-2m15.357 2H15"/></svg><span style="letter-spacing:0.39px">Republish</span></div><div class="upd" style="top:12px"><svg width="16" height="16" viewBox="0 0 20 20" fill="#374151"><path d="M17.414 2.586a2 2 0 0 0-2.828 0L7 10.172V13h2.828l7.586-7.586a2 2 0 0 0 0-2.828z"/><path fill-rule="evenodd" d="M2 6a2 2 0 0 1 2-2h4a1 1 0 0 1 0 2H4v10h10v-4a1 1 0 1 1 2 0v4a2 2 0 0 1-2 2H4a2 2 0 0 1-2-2V6z"/></svg><span style="letter-spacing:0.57px">Update</span></div><div class="del" style="top:14px"><svg width="16" height="16" viewBox="0 0 20 20" fill="#c81e1e"><path fill-rule="evenodd" d="M9 2a1 1 0 0 0-.894.553L7.382 4H4a1 1 0 0 0 0 2v10a2 2 0 0 0 2 2h8a2 2 0 0 0 2-2V6a1 1 0 1 0 0-2h-3.382l-.724-1.447A1 1 0 0 0 11 2H9zM7 8a1 1 0 0 1 2 0v6a1 1 0 1 1-2 0V8zm5-1a1 1 0 0 0-1 1v6a1 1 0 1 0 2 0V8a1 1 0 0 0-1-1z"/></svg></div></div>
<svg class="abs" style="left:1390px;top:308px" width="130" height="26" viewBox="1390 308 130 26"><path d="M1396.800 322 1502 321" stroke="#f0441f" stroke-width="3.500" stroke-linecap="round"/><path d="M1513.100 321.100 1501 314v14.200z" fill="#f0441f"/></svg>
</body></html>
